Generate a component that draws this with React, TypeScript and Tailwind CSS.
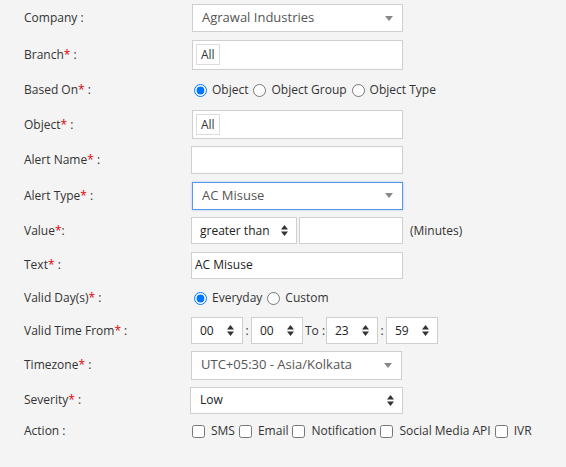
import type { ReactNode } from "react";

const font = { fontFamily: '"Open Sans", "Noto Sans", sans-serif' };

function Req() {
  return <span className="text-[#e00000]">*</span>;
}

function Row({ h, label, children }: { h: string; label: ReactNode; children: ReactNode }) {
  return (
    <div className={`flex items-center ${h}`}>
      <div className="w-[191px] shrink-0 pl-[24px] text-[12px] text-[#333]">{label}</div>
      <div className="flex items-center">{children}</div>
    </div>
  );
}

function Caret() {
  return (
    <svg width="8" height="5" viewBox="0 0 8 5" className="shrink-0">
      <path d="M0 0h8L4 5z" fill="#888" />
    </svg>
  );
}

function UpDown() {
  return (
    <svg width="7" height="11" viewBox="0 0 7 11" className="shrink-0">
      <path d="M3.5 0L7 4.5H0z M0 6.5h7L3.5 11z" fill="#333" />
    </svg>
  );
}

function Select2({ value, focus, w = "w-[211px]", h = "h-[28px]" }: { value: string; focus?: boolean; w?: string; h?: string }) {
  return (
    <div
      className={`flex items-center justify-between bg-white pl-[9px] pr-[9px] text-[13px] text-[#555] ${w} ${h} ${
        focus ? "border border-[#5b97f0] shadow-[0_0_2px_rgba(91,151,240,0.5)]" : "border border-[#cfcfcf]"
      }`}
    >
      <span>{value}</span>
      <Caret />
    </div>
  );
}

function NativeSelect({ value, w, h = "h-[27px]", pl = "pl-[8px]" }: { value: string; w: string; h?: string; pl?: string }) {
  return (
    <div className={`flex items-center justify-between border border-[#cfcfcf] bg-white pr-[8px] text-[12px] text-[#222] ${w} ${h} ${pl}`}>
      <span>{value}</span>
      <UpDown />
    </div>
  );
}

function TagBox({ h = "h-[30px]" }: { h?: string }) {
  return (
    <div className={`flex w-[211px] items-center border border-[#cfcfcf] bg-white pl-[3px] ${h}`}>
      <span className="border border-[#dcdcdc] px-[4px] py-[1px] text-[12px] leading-[17px] text-[#333]">All</span>
    </div>
  );
}

function Radio({ checked, label }: { checked?: boolean; label: string }) {
  return (
    <label className="flex items-center text-[12px] text-[#333]">
      <input type="radio" readOnly checked={!!checked} className="m-0 mr-[5px] ml-[3px] h-[13px] w-[13px]" />
      {label}
    </label>
  );
}

function Check({ label }: { label: string }) {
  return (
    <label className="flex items-center text-[12px] text-[#333]">
      <input type="checkbox" readOnly className="m-0 mr-[6px] ml-[1px] h-[13px] w-[13px]" />
      {label}
    </label>
  );
}

export default function App() {
  return (
    <div className="h-[467px] w-[566px] bg-[#f4f4f4]" style={font}>
      <Row h="h-[36px]" label="Company :">
        <div className="pl-[1px]">
          <Select2 value="Agrawal Industries" />
        </div>
      </Row>
      <Row h="h-[37px]" label={<>Branch<Req /> :</>}>
        <div className="pl-[1px]">
          <TagBox />
        </div>
      </Row>
      <Row h="h-[34px]" label={<>Based On<Req /> :</>}>
        <div className="flex items-center gap-[2px]">
          <Radio checked label="Object" />
          <Radio label="Object Group" />
          <Radio label="Object Type" />
        </div>
      </Row>
      <Row h="h-[35px]" label={<>Object<Req /> :</>}>
        <div className="pl-[1px]">
          <TagBox h="h-[29px]" />
        </div>
      </Row>
      <Row h="h-[36px]" label={<>Alert Name<Req /> :</>}>
        <div className="h-[28px] w-[212px] border border-[#cfcfcf] bg-white" />
      </Row>
      <Row h="h-[35px]" label={<>Alert Type<Req /> :</>}>
        <div className="pl-[1px]">
          <Select2 value="AC Misuse" focus />
        </div>
      </Row>
      <Row h="h-[35px]" label={<>Value<Req />:</>}>
        <NativeSelect value="greater than" w="w-[106px]" />
        <div className="ml-[2px] h-[27px] w-[104px] border border-[#cfcfcf] bg-white" />
        <span className="ml-[7px] text-[12px] text-[#333]">(Minutes)</span>
      </Row>
      <Row h="h-[34px]" label={<>Text<Req /> :</>}>
        <div className="flex h-[27px] w-[212px] items-center border border-[#cfcfcf] bg-white pl-[3px] text-[12px] text-[#222]">
          AC Misuse
        </div>
      </Row>
      <Row h="h-[32px]" label={<>Valid Day(s)<Req /> :</>}>
        <div className="flex items-center gap-[2px]">
          <Radio checked label="Everyday" />
          <Radio label="Custom" />
        </div>
      </Row>
      <Row h="h-[33px]" label={<>Valid Time From<Req /> :</>}>
        <NativeSelect value="00" w="w-[52px]" />
        <span className="mx-[2px] w-[4px] text-center text-[12px] text-[#333]">:</span>
        <NativeSelect value="00" w="w-[52px]" />
        <span className="ml-[2px] w-[21px] shrink-0 whitespace-nowrap text-[12px] text-[#333]">To :</span>
        <NativeSelect value="23" w="w-[52px]" />
        <span className="mx-[2px] w-[4px] text-center text-[12px] text-[#333]">:</span>
        <NativeSelect value="59" w="w-[52px]" />
      </Row>
      <Row h="h-[36px]" label={<>Timezone<Req /> :</>}>
        <Select2 value="UTC+05:30 - Asia/Kolkata" h="h-[29px]" />
      </Row>
      <Row h="h-[34px]" label={<>Severity<Req /> :</>}>
        <div className="-ml-[1px]">
          <NativeSelect value="Low" w="w-[213px]" pl="pl-[9px]" />
        </div>
      </Row>
      <Row h="h-[28px]" label="Action :">
        <div className="flex items-center gap-[3px]">
          <Check label="SMS" />
          <Check label="Email" />
          <Check label="Notification" />
          <Check label="Social Media API" />
          <Check label="IVR" />
        </div>
      </Row>
    </div>
  );
}
